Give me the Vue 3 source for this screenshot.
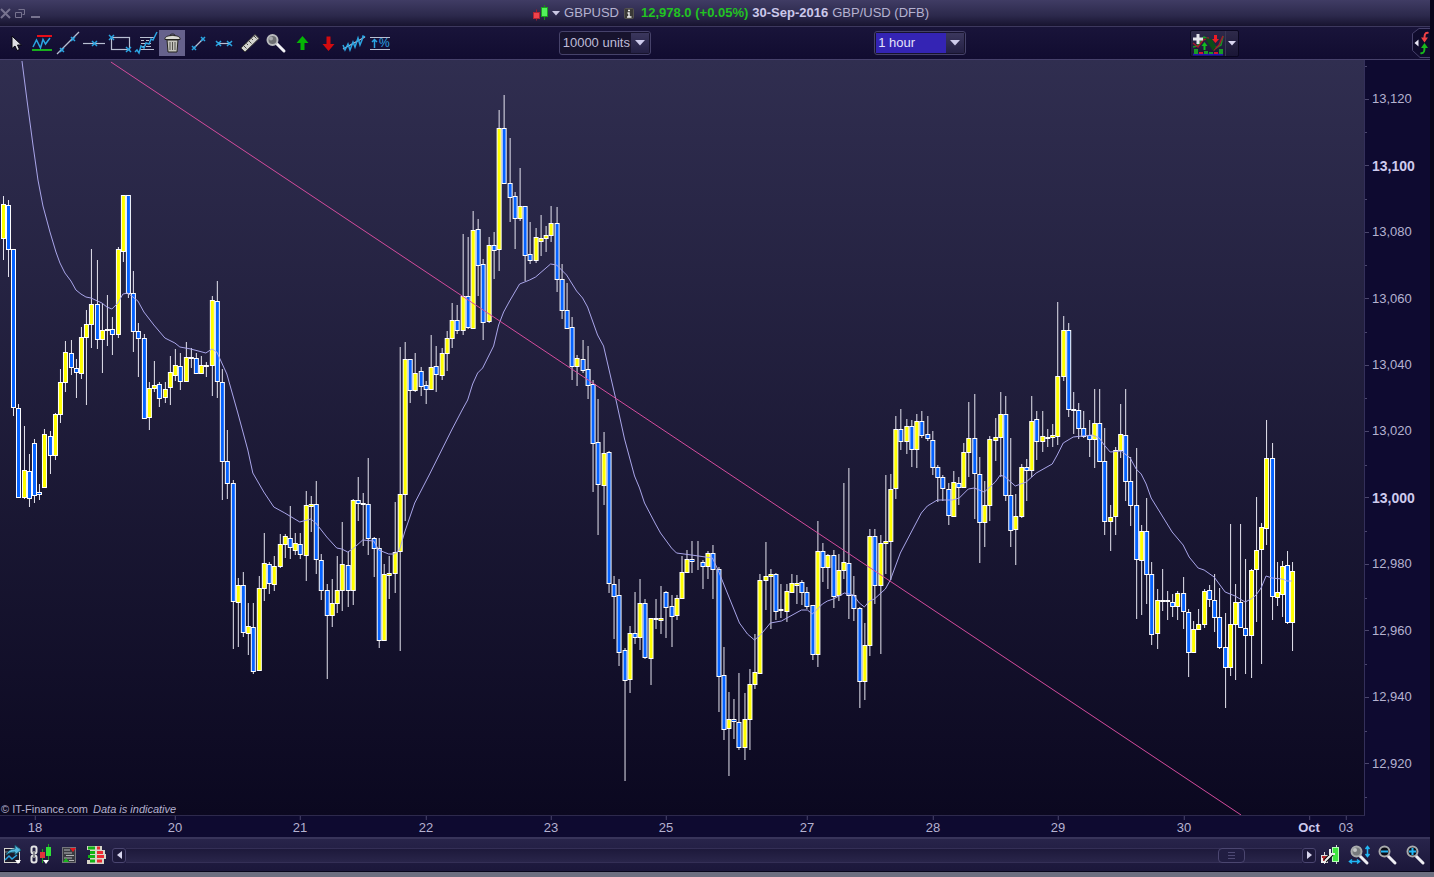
<script setup>
import { ref } from 'vue'

const units = ref('10000 units')
const period = ref('1 hour')
const scroll = ref(95)

// Each candle: x, high, body top, body bottom, low, kind (y rising, b falling)
const raw = `3 196 204 238 260 y;8 200 205 249 277 b;13 249 249 407 416 b;18 404 408 497 498 b;24 426 470 497 499 y;29 454 471 498 507 b;34 439 443 495 503 b;39 484 492 494 500 b;44 429 434 487 487 y;50 431 436 455 474 b;55 413 414 455 460 y;60 369 382 414 423 y;65 341 352 382 392 y;71 340 353 367 375 b;76 359 368 372 398 b;81 327 337 373 379 y;86 310 324 337 405 y;91 249 304 324 348 y;97 260 304 339 349 b;102 303 330 339 373 y;107 295 329 330 346 b;112 317 329 334 355 b;118 247 249 334 338 y;123 195 195 251 262 y;128 195 195 293 298 b;133 271 293 331 352 b;138 323 331 338 377 b;144 334 338 418 419 b;149 382 388 417 430 y;154 361 385 388 392 y;159 382 384 398 407 b;165 382 389 397 403 y;170 356 372 387 405 y;175 349 365 375 381 y;180 353 366 381 390 b;186 342 357 381 382 y;191 348 357 358 368 b;196 353 358 373 374 b;201 356 365 373 374 y;206 362 365 366 377 b;212 296 300 365 396 y;217 281 301 381 398 b;222 369 382 461 500 b;227 430 461 483 499 b;233 480 483 601 649 b;238 578 585 602 647 y;243 572 585 632 637 b;248 603 626 633 655 y;253 603 627 671 674 b;259 576 588 670 670 y;264 533 563 588 601 y;269 562 564 583 594 b;274 556 566 584 591 y;280 534 544 566 568 y;285 534 536 544 558 y;290 506 538 547 559 b;295 533 543 550 555 y;300 533 544 554 559 b;306 491 505 555 581 y;311 496 504 506 532 y;316 481 504 559 574 b;321 554 560 590 600 b;327 584 590 615 679 b;332 579 603 615 627 y;337 556 590 603 613 y;342 522 564 590 611 y;348 552 565 590 607 b;353 499 500 590 605 y;358 477 500 503 521 b;363 493 503 504 546 b;368 458 504 538 555 b;374 537 538 548 577 b;379 538 548 640 648 b;384 564 574 640 640 y;389 556 573 575 599 y;395 502 552 573 593 y;400 347 494 551 651 y;405 342 359 494 521 y;410 359 359 390 403 b;415 353 373 390 392 y;421 367 371 386 396 b;426 381 385 389 404 b;431 335 367 389 390 y;436 346 366 374 392 b;442 348 353 375 380 y;447 331 338 353 371 y;452 303 320 338 348 y;457 305 320 330 334 b;463 234 296 330 335 y;468 237 296 327 329 b;473 211 230 328 328 y;478 219 229 265 296 b;483 259 264 322 340 b;489 237 245 321 323 y;494 232 245 250 279 b;499 110 128 249 271 y;504 95 128 183 184 b;510 138 183 197 222 b;515 192 196 218 249 b;520 168 206 218 221 y;525 206 206 255 281 b;530 222 254 260 264 b;536 228 237 260 263 y;541 215 238 241 256 y;546 226 235 238 252 y;551 206 223 235 242 y;557 207 223 279 292 b;562 264 279 310 319 b;567 283 310 328 329 b;572 317 327 366 380 b;577 355 358 366 386 y;583 340 359 370 373 b;588 346 369 385 399 b;593 380 384 443 492 b;598 399 442 484 535 b;604 432 453 485 505 y;609 451 452 583 593 b;614 576 584 596 639 b;619 579 595 652 666 b;625 648 650 680 781 b;630 626 633 679 693 y;635 592 633 637 644 b;640 579 603 637 650 y;645 599 603 657 659 b;651 618 618 658 685 y;656 599 618 619 629 b;661 586 618 620 634 y;666 591 592 607 638 b;672 595 606 616 647 b;677 595 598 615 620 y;682 556 572 598 599 y;687 550 559 572 572 y;692 541 559 561 573 b;698 541 562 562 570 b;703 560 562 566 589 b;708 551 553 566 579 y;713 545 553 569 599 b;719 567 569 676 712 b;724 647 675 729 740 b;729 692 719 728 776 y;734 699 719 721 739 b;739 673 722 747 750 b;745 693 719 747 760 y;750 669 684 719 750 y;755 634 672 684 689 y;760 574 580 673 674 y;766 542 576 580 610 y;771 569 574 576 629 y;776 573 574 611 620 b;781 584 609 610 618 b;787 584 591 611 622 y;792 574 583 592 592 y;797 575 583 585 604 y;802 580 582 592 605 b;807 587 592 606 609 b;813 605 605 654 660 b;818 521 551 654 667 y;823 543 551 567 582 b;828 554 555 567 589 y;834 550 555 596 608 b;839 554 570 595 601 y;844 483 562 570 579 y;849 468 563 595 619 b;854 576 595 608 621 b;860 607 608 681 708 b;865 623 645 681 700 y;870 529 536 645 656 y;875 529 536 585 604 b;881 535 543 585 654 y;886 475 541 543 574 y;891 474 489 541 580 y;896 416 429 488 499 y;901 409 429 441 450 b;907 419 426 441 454 y;912 420 426 449 467 b;917 414 421 449 468 y;922 411 421 435 438 b;928 416 434 438 441 b;933 431 440 467 475 b;938 465 467 477 502 b;943 475 477 488 501 b;949 483 489 515 525 b;954 471 482 516 517 y;959 477 483 487 505 b;964 443 452 487 488 y;969 402 438 452 477 y;975 394 438 473 519 b;980 457 474 522 563 b;985 481 505 522 547 y;990 436 439 505 521 y;996 418 437 440 461 y;1001 392 414 437 477 y;1006 396 414 495 501 b;1011 438 495 530 547 b;1016 494 516 529 565 y;1022 464 467 516 518 y;1027 459 467 470 501 b;1032 396 421 470 477 y;1037 411 419 441 460 b;1043 411 436 441 452 y;1048 429 437 438 447 b;1053 424 435 437 447 y;1058 302 376 436 445 y;1064 316 330 376 381 y;1069 323 330 409 417 b;1074 392 409 410 434 b;1079 403 410 428 439 b;1084 411 428 436 438 b;1090 420 435 439 457 b;1095 389 423 439 468 y;1100 389 423 461 461 b;1105 428 461 521 535 b;1111 505 517 521 551 y;1116 447 450 516 535 y;1121 404 434 450 458 y;1126 389 435 481 501 b;1131 457 481 505 526 b;1137 448 505 559 619 b;1142 525 531 560 615 y;1147 498 531 574 604 b;1152 562 574 634 645 b;1158 589 600 633 649 y;1163 569 600 601 611 y;1168 591 600 601 620 b;1173 594 602 606 617 b;1178 591 593 606 620 y;1184 577 593 611 629 b;1189 609 612 652 677 b;1194 621 629 652 652 y;1199 609 624 629 630 y;1205 589 591 624 628 y;1210 585 590 599 607 b;1215 574 600 617 632 b;1220 588 617 647 649 b;1226 613 647 667 708 b;1231 524 624 667 676 y;1236 584 602 624 680 y;1241 524 602 627 627 b;1246 559 628 635 674 b;1252 569 570 635 678 y;1257 497 550 569 622 y;1262 523 527 549 664 y;1267 420 458 528 545 y;1273 443 458 596 620 b;1278 562 592 597 606 y;1283 561 566 594 617 y;1288 551 565 622 624 b;1293 562 571 622 651 y`
const candles = raw.split(';').map((row) => {
  const [x, high, top, bottom, low, kind] = row.split(' ')
  return { x: +x, high: +high, top: +top, bottom: +bottom, low: +low, kind }
})

const average = '22,61 27,100 33,145 38,180 43,206 50,232 56,252 60,263 65,273 71,281 76,290 81,294 86,297 91,298 102,303 107,307 112,309 118,303 123,294 128,293 133,297 138,301 144,312 154,325 165,338 175,343 180,347 191,349 206,353 212,349 217,352 227,374 238,413 248,450 253,473 264,492 274,507 285,513 300,522 311,519 316,523 327,537 337,548 342,549 348,552 353,549 363,540 374,541 379,550 389,554 395,554 400,549 405,532 415,503 430,474 452,430 463,409 468,400 473,384 478,373 483,368 494,346 499,325 504,312 510,301 520,284 530,280 536,277 551,264 557,265 567,275 577,291 583,298 588,307 598,335 604,346 616,398 625,439 635,476 640,488 645,503 656,524 661,533 672,548 677,553 692,555 713,558 719,571 725,586 740,623 748,634 755,640 761,635 771,623 782,621 802,610 808,610 813,614 823,604 828,601 834,599 845,593 854,595 860,603 865,607 870,601 875,599 886,589 891,580 901,553 912,532 922,513 928,506 938,500 953,500 960,498 969,489 975,488 985,492 996,482 1001,475 1006,477 1016,486 1027,482 1037,473 1053,464 1058,455 1064,443 1074,437 1083,436 1093,435 1100,438 1105,445 1111,452 1122,451 1131,458 1137,469 1142,474 1147,484 1152,498 1173,532 1184,545 1190,557 1199,568 1205,570 1215,577 1226,592 1236,596 1246,602 1252,599 1257,595 1262,588 1267,576 1273,578 1283,579 1288,581 1293,581'

const prices = ['13,120', '13,100', '13,080', '13,060', '13,040', '13,020', '13,000', '12,980', '12,960', '12,940', '12,920']
const majors = ['13,100', '13,000']

const dates = [
  { at: 35, text: '18' }, { at: 175, text: '20' }, { at: 300, text: '21' }, { at: 426, text: '22' },
  { at: 551, text: '23' }, { at: 666, text: '25' }, { at: 807, text: '27' }, { at: 933, text: '28' },
  { at: 1058, text: '29' }, { at: 1184, text: '30' }, { at: 1309, text: 'Oct', major: true }, { at: 1346, text: '03' },
]
const dateLeft = (at) => ({ left: (at / 1430) * 100 + '%' })
</script>

<template>
  <main class="window">
    <header class="title">
      <div class="controls">
        <button aria-label="Close"><svg width="11" height="11"><path d="M1 1l9 9M10 1l-9 9" class="ctl" stroke-width="2" /></svg></button>
        <button aria-label="Restore"><svg width="11" height="11"><path d="M3.500 1.500h6v5h-2M.5 4.500h6v5h-6z" class="ctl" /></svg></button>
        <button aria-label="Minimise"><svg width="11" height="11"><path d="M1 9h9" class="ctl" stroke-width="2" /></svg></button>
      </div>
      <div class="instrument">
        <svg width="16" height="16" viewBox="0 0 16 16">
          <path d="M3.500 4.500v11" stroke="#a01c2c" /><rect x=".5" y="7.500" width="6" height="6" fill="#f0434b" stroke="#b02532" />
          <path d="M11.500 0v15" stroke="#148c14" /><rect x="8.500" y="2.500" width="6" height="9" fill="#53f25b" stroke="#1ba020" />
        </svg>
        <button class="caret" aria-label="Change instrument"><svg width="8" height="5"><path d="M0 0h8l-4 4.500z" fill="#cbc8e4" /></svg></button>
        <span>GBPUSD</span>
        <svg class="info" width="10" height="11" viewBox="0 0 10 11"><rect x=".5" y=".5" width="9" height="10" rx="1" fill="#3a3937" stroke="#55534f" /><path d="M4 2.500h2M3.500 5H5V8.500M3 9h4.500" stroke="#ececec" fill="none" stroke-width="1.500" /></svg>
        <strong class="up">12,978.0 (+0.05%)</strong>
        <strong class="day">30-Sep-2016</strong>
        <span>GBP/USD (DFB)</span>
      </div>
    </header>

    <nav class="toolbar">
      <div class="tools">
        <button aria-label="Select"><svg viewBox="0 0 26 26"><path d="M9 6v12.500l3-2.500 2 4.500 2.500-1-2-4.500h4z" fill="#dedee4" stroke="#04040c" /></svg></button>
        <button aria-label="Levels"><svg viewBox="0 0 26 26"><path d="M8 6h15" stroke="#e80c18" stroke-width="2" /><path d="M3 20h20" stroke="#18b01c" stroke-width="2" /><path d="M4 17l3.500-7 4 8 2.500-8.500 2.500 4.500L21 8" class="blue" /></svg></button>
        <button aria-label="Line"><svg viewBox="0 0 26 26"><path d="M2 24L24 2" class="pale" /><path d="M5 18l4 4M9 18l-4 4M16 7l4 4M20 7l-4 4" class="blue" /></svg></button>
        <button aria-label="Horizontal line"><svg viewBox="0 0 26 26"><path d="M2 13.500h22" class="pale" /><path d="M11 11l5 5M16 11l-5 5" class="blue" /></svg></button>
        <button aria-label="Rectangle"><svg viewBox="0 0 26 26"><rect x="4.500" y="7.500" width="18" height="12" class="pale" /><path d="M2 5l5 5M7 5l-5 5M19 17l5 5M24 17l-5 5" class="blue" /></svg></button>
        <button aria-label="Fibonacci"><svg viewBox="0 0 26 26"><path d="M7 7.500h14M7 19.500h14M8 10.500h3M13 10.500h3M8 13.500h4M14 13.500h4M8 16.500h3M13 16.500h5" class="pale" /><path d="M2 22l2-2 2 3 2-7 3 2 2-5 3 1 2-5 2 1 4-8" class="blue" /></svg></button>
        <button class="active" aria-label="Delete"><svg viewBox="0 0 26 26"><path d="M8 10h11l-1 12H9z" fill="#c4c4bd" stroke="#24241f" /><path d="M11 12v8M13.500 12v8M16 12v8" stroke="#51514c" /><path d="M6 8.500c0-2 4-3 7.500-3s7.500 1 7.500 3v1H6z" fill="#dcdcd4" stroke="#24241f" /><path d="M11 5.500c0-2 5-2 5 0" fill="none" stroke="#24241f" /></svg></button>
        <button aria-label="Segment"><svg viewBox="0 0 26 26"><path d="M9 18l9-9" class="pale" /><path d="M7 16l4 4M11 16l-4 4M16 7l4 4M20 7l-4 4" class="blue" /></svg></button>
        <button aria-label="Horizontal segment"><svg viewBox="0 0 26 26"><path d="M7 13.500h12" class="pale" /><path d="M5 11l5 5M10 11l-5 5M16 11l5 5M21 11l-5 5" class="blue" /></svg></button>
        <button aria-label="Ruler"><svg viewBox="0 0 26 26"><path d="M4 18L18 4.500l4 4L8 22z" fill="#d3d3cf" stroke="#3c3c38" /><path d="M7 16l2.500 2.500M9.500 13.500L11 15M12 11l2.500 2.500M14.500 8.500L16 10M17 6l2.500 2.500" stroke="#45453f" /></svg></button>
        <button aria-label="Zoom"><svg viewBox="0 0 26 26"><path d="M13 13l8 8" stroke="#f2f2f6" stroke-width="3" stroke-linecap="round" /><circle cx="9.500" cy="10" r="5" fill="#6d6f72" stroke="#b9bbbd" stroke-width="2" /><circle cx="8" cy="8.500" r="2" fill="#a5a8ab" /></svg></button>
        <button aria-label="Buy"><svg viewBox="0 0 26 26"><path d="M13.500 6l6 7h-4v7h-4v-7h-4z" fill="#05b505" /></svg></button>
        <button aria-label="Sell"><svg viewBox="0 0 26 26"><path d="M13.500 21l6-7h-4V6.500h-4V14h-4z" fill="#d30b0f" /></svg></button>
        <button aria-label="Channel"><svg viewBox="0 0 26 26"><path d="M2 19L24 7" class="pale" /><path d="M2 15l2 5 3-6 2 6 3-8 2 5 3-9 2 7 2-5 1-4 2 1" class="blue" /></svg></button>
        <button aria-label="Percent move"><svg viewBox="0 0 26 26"><path d="M3 7.500h20M3 19.500h20" class="pale" /><path d="M7.500 18V10M5 12l2.500-2.500L10 12" class="blue" /><text x="12" y="17" class="pct">%</text></svg></button>
      </div>

      <div>
        <label class="pick">
          <select v-model="units" aria-label="Units"><option>10000 units</option><option>20000 units</option></select>
          <span class="drop"><svg width="10" height="6"><path d="M0 0h10l-5 5.500z" fill="#cfccec" /></svg></span>
        </label>
      </div>
      <div>
        <label class="pick chosen">
          <select v-model="period" aria-label="Period"><option>1 hour</option><option>4 hours</option></select>
          <span class="drop"><svg width="10" height="6"><path d="M0 0h10l-5 5.500z" fill="#cfccec" /></svg></span>
        </label>
      </div>
      <div class="right">
        <div class="indicator">
          <button aria-label="Add indicator"><svg width="34" height="25" viewBox="0 0 34 25">
            <path d="M2 16l4-1 7-9 6 3 6 8 5-3 2-9" fill="none" stroke="#169a24" stroke-width="1.500" />
            <path d="M2 12l5 4 5-7 5-2 6 12 5-5 4-9" fill="none" stroke="#a4192c" stroke-width="1.500" />
            <path d="M14 7l7 1 4 8-3 4z" fill="#0c4d18" />
            <path d="M13.500 11l3 4h-2v4h-2v-4h-2z" fill="#12c01e" /><path d="M24.500 12l3.500-4h-2V4h-3v4h-2z" fill="#ee1c25" />
            <path d="M7 3v10M2 8h10" stroke="#e4e4ec" stroke-width="3" />
            <path d="M2 23.500h30" stroke="#2514b4" stroke-width="2" />
            <path d="M3 18h4v5H3zM13 20h4v3h-4zM18 21h4v2h-4zM28 18h4v5h-4z" fill="#189c26" /><path d="M8 21h4v2H8zM23 21h4v2h-4z" fill="#d4152f" />
          </svg></button>
          <button class="more" aria-label="Indicator list"><svg width="8" height="5"><path d="M0 0h8l-4 4.500z" fill="#d9d6f0" /></svg></button>
        </div>
        <button class="tab" aria-label="Open orders panel"><svg width="19" height="32" viewBox="0 0 19 32">
          <path d="M19 1.500H8L1.500 6.500v17L9 30.500h10" fill="#0f0b2c" stroke="#46416b" />
          <path d="M7.500 12.500v7l-4-3.500z" fill="#e8e6f4" />
          <path d="M17.500 6c-4-1-4 3-4 5" fill="none" stroke="#f04045" stroke-width="2" /><path d="M10 10.500h7l-3.500 5z" fill="#f04045" />
          <path d="M9.500 26c4 1 4-3 4-6" fill="none" stroke="#18b81c" stroke-width="2" /><path d="M10 21h7l-3.500-5z" fill="#18b81c" />
        </svg></button>
      </div>
    </nav>

    <section class="chart">
      <div class="plot">
        <svg class="series" viewBox="0 60 1365 755" preserveAspectRatio="none">
          <g v-for="c in candles" :key="c.x">
            <path :d="`M${c.x + 0.5} ${c.high}V${c.low}`" class="wick" />
            <rect :x="c.x - 1.5" :y="c.top + 0.5" width="4" :height="c.bottom - c.top" :class="c.kind === 'y' ? 'rise' : 'fall'" />
          </g>
          <polyline :points="average" class="average" />
          <path d="M111 62L1242 815" class="trend" />
        </svg>
        <p class="source">© IT-Finance.com <em>Data is indicative</em></p>
      </div>
      <ol class="prices">
        <li v-for="p in prices" :key="p" :class="{ major: majors.includes(p) }">{{ p }}</li>
      </ol>
      <div class="dates">
        <span v-for="d in dates" :key="d.text" :style="dateLeft(d.at)" :class="{ major: d.major }">{{ d.text }}</span>
      </div>
    </section>

    <footer class="bottom">
      <button aria-label="Save chart"><svg viewBox="0 0 28 24"><rect x="4.500" y="5.500" width="15" height="14" fill="#1c1b2c" stroke="#d6d4cf" /><path d="M5 9h14" stroke="#8b8b90" /><path d="M5 17l4-4 3 3 5-4" class="blue" /><path d="M6 12c2-5 6-6 9-6V2l6 5-6 5V9c-4 0-6 1-9 3z" fill="#54b9e0" stroke="#15596f" /><path d="M15 17h6l-3 4z" fill="#fff" /></svg></button>
      <button aria-label="Link and style"><svg viewBox="0 0 28 24"><rect x="3.500" y="3.500" width="5" height="7" rx="2" fill="none" stroke="#e4e4e4" stroke-width="2" /><rect x="3.500" y="12.500" width="5" height="7" rx="2" fill="none" stroke="#e4e4e4" stroke-width="2" /><path d="M6 8v7" stroke="#85858c" stroke-width="2" /><path d="M14.500 6v14M20.500 1v16" stroke="#1aa51e" /><rect x="12" y="9" width="5" height="6" fill="#e0343b" /><rect x="18" y="4" width="5" height="9" fill="#2fe239" /><path d="M15 17h6l-3 4z" fill="#fff" /></svg></button>
      <button aria-label="Order list"><svg viewBox="0 0 28 24"><rect x="6.500" y="4.500" width="13" height="15" fill="#3b3c42" stroke="#75767c" /><path d="M8 7h6M8 10h8M10 12.500h8M8 15h8M13 17.500h5" stroke="#b4b5b8" /><path d="M14 5h6l-3 4z" fill="#e5141c" /><path d="M7 19h6l-3-4z" fill="#18b51c" /></svg></button>
      <button aria-label="Order book"><svg viewBox="0 0 28 24"><path d="M3 3h15v4h3v5h-1v-1h2v5h-2v5H3v-4h3V7H3z" fill="#d7d5c8" /><path d="M4 5h7M6 9.500h5M4 13.500h7M6 18h5" stroke="#12b315" stroke-width="3" /><path d="M13 5h3M13 9.500h6M13 13.500h7M13 18h5" stroke="#ec2a32" stroke-width="3" /></svg></button>
      <div class="scroller">
        <button class="step" aria-label="Scroll back"><svg width="5" height="8"><path d="M5 0v8L0 4z" fill="#d8d6ee" /></svg></button>
        <input v-model="scroll" type="range" min="0" max="100" aria-label="Chart position" />
        <button class="step" aria-label="Scroll forward"><svg width="5" height="8"><path d="M0 0v8l5-4z" fill="#d8d6ee" /></svg></button>
      </div>
      <button aria-label="Chart settings"><svg viewBox="0 0 28 24"><path d="M6.500 9v12M18.500 2v19" stroke="#d8d8d8" /><rect x="3.500" y="12.500" width="6" height="7" fill="#b3282d" stroke="#ddd" /><rect x="14.500" y="4.500" width="6" height="14" fill="#3fe53f" stroke="#b9ffb9" /><path d="M7 18l7-7" stroke="#0a0a0a" stroke-width="4" /><path d="M7 18l7-7M12 6v5h5M4 15v4h4" stroke="#ececec" stroke-width="2" fill="none" /></svg></button>
      <button aria-label="Fit"><svg viewBox="0 0 28 24"><path d="M14 13l7 7" stroke="#eeeef4" stroke-width="3" stroke-linecap="round" /><circle cx="10.500" cy="8.500" r="5" fill="#777a7d" stroke="#a9abad" stroke-width="2" /><circle cx="9" cy="7" r="2" fill="#c3c5c6" /><path d="M21.500 4v9M19.500 6l2-2.500 2 2.500M19.500 11l2 2.500 2-2.500M4 18.500h9M6 16.500l-2.500 2 2.500 2M11 16.500l2.500 2-2.500 2" stroke="#20b6f4" stroke-width="1.500" fill="none" /></svg></button>
      <button aria-label="Zoom out"><svg viewBox="0 0 28 24"><path d="M14 13l7 7" stroke="#eeeef4" stroke-width="3" stroke-linecap="round" /><circle cx="10.500" cy="8.500" r="5" fill="#0c0d15" stroke="#a9abad" stroke-width="2" /><path d="M7 8.500h7" stroke="#20b6f4" stroke-width="2" /></svg></button>
      <button aria-label="Zoom in"><svg viewBox="0 0 28 24"><path d="M14 13l7 7" stroke="#eeeef4" stroke-width="3" stroke-linecap="round" /><circle cx="10.500" cy="8.500" r="5" fill="#0c0d15" stroke="#a9abad" stroke-width="2" /><path d="M7 8.500h7M10.500 5v7" stroke="#20b6f4" stroke-width="2" /></svg></button>
    </footer>
  </main>
</template>

<style>
html { background: #6d6f80; }
body { background: linear-gradient(#07051a, #07051a) top / 100% calc(100% - 5px) no-repeat; min-height: 100vh; }
</style>

<style scoped>
.window {
  box-sizing: border-box;
  display: flex;
  flex-direction: column;
  height: calc(100vh - 6px);
  margin-right: 4px;
  background: #0e0a30;
  color: #b5b2d0;
  font: 13px/16px "Liberation Sans", Arial, sans-serif;
}
button { padding: 0; border: 0; background: none; color: inherit; display: flex; align-items: center; justify-content: center; }
.title {
  display: flex;
  align-items: center;
  height: 26px;
  flex: none;
  position: relative;
  background: linear-gradient(#403c64, #2c294c 60%, #17132f);
  border-bottom: 1px solid #3d385e;
}
.controls { display: flex; gap: 4px; }
.ctl { fill: none; stroke: #77738f; }
.instrument { display: flex; align-items: center; gap: 4px; position: absolute; left: 37%; margin-left: 4px; white-space: nowrap; }
.info { margin: 0 3px 0 1px; }
.caret { margin-left: -1px; }
.up { color: #22c322; }
.day { color: #cbc8ea; }
.toolbar {
  display: grid;
  grid-template-columns: 39% 22% 22% 1fr;
  align-items: center;
  height: 30px;
  padding-bottom: 2px;
  flex: none;
  background: linear-gradient(#19143a, #110c30);
  border-bottom: 1px solid #46416a;
}
.tools { display: flex; padding-left: 3px; }
.tools button { width: 26px; height: 26px; }
.tools svg { width: 26px; height: 26px; }
.tools .active { background: #66628c; }
.blue { fill: none; stroke: #2ba5e2; stroke-width: 1.5; }
.pale { fill: none; stroke: #b9bfd2; stroke-width: 1.2; }
.pct { font: 12px "Liberation Sans", sans-serif; fill: #2ba5e2; }
.pick { position: relative; display: flex; width: max-content; margin-left: 1px; border: 1px solid #46426a; border-radius: 3px; background: #17132d; padding: 1px; }
.pick select { appearance: none; border: 0; margin: 0; padding: 0 0 0 2px; width: 88px; height: 20px; background: transparent; color: #bfbcd8; font: inherit; }
.chosen { margin-left: 2px; }
.chosen select { background: #3424b4; color: #e4e2fa; }
.drop { position: absolute; right: 1px; top: 1px; bottom: 1px; width: 18px; display: flex; align-items: center; justify-content: center; background: linear-gradient(#3b375d, #242044); pointer-events: none; }
.right { display: flex; align-items: center; justify-content: space-between; padding-left: 3px; }
.indicator { display: flex; background: linear-gradient(#2e2a4a, #1a1636); border: 1px solid #0a0720; border-radius: 2px; }
.more { width: 13px; border-left: 1px solid #3b3755; }
.chart {
  display: grid;
  grid-template-columns: minmax(0, 1fr) 65px;
  grid-template-rows: minmax(0, 1fr) 21px;
  flex: 1;
  min-height: 0;
}
.plot { position: relative; min-height: 0; background: linear-gradient(#302e50, #0b0820); border-right: 1px solid #34305a; border-bottom: 1px solid #2d294c; overflow: hidden; }
.series { display: block; width: 100%; height: 100%; }
.wick { stroke: #e6e5f0; stroke-width: 1; }
.rise, .fall { stroke: #fff; stroke-width: 1; }
.rise { fill: #ff0; }
.fall { fill: #0562ff; }
.average { fill: none; stroke: #aaa6ea; stroke-width: 1; }
.trend { stroke: #d44b9d; stroke-width: 1; }
.source { position: absolute; left: 1px; bottom: 0; margin: 0; font-size: 11px; line-height: 12px; white-space: pre; }
.source em { margin-left: 2px; }
.prices { display: flex; flex-direction: column; margin: 0; padding: 6px 0 18px; list-style: none; }
.prices li { flex: 1; display: flex; align-items: center; position: relative; }
.prices li::before { content: ""; width: 4px; height: 1px; margin-right: 3px; background: #4a466c; }
.prices li::after, .prices::after { content: ""; position: absolute; left: 0; top: 0; width: 2px; height: 1px; background: #4a466c; }
.prices::after { position: static; }
.major { font-weight: bold; font-size: 14px; color: #cecbee; }
.dates { grid-column: 1 / -1; position: relative; }
.dates span { position: absolute; top: 4px; transform: translateX(-50%); }
.dates span::before { content: ""; position: absolute; left: 50%; top: -4px; width: 1px; height: 4px; background: #4a466c; }
.dates .major { font-size: 13px; }
.bottom { display: flex; align-items: center; height: 32px; flex: none; background: linear-gradient(#28244a, #1b173a); border-top: 2px solid #38345a; }
.bottom > button { width: 28px; height: 24px; flex: none; }
.bottom > button svg { width: 28px; height: 24px; }
.scroller { display: flex; align-items: center; flex: 1; min-width: 0; margin-right: 2px; }
.step { width: 14px; height: 15px; border: 1px solid #4a4570; border-radius: 3px; background: #1c183a; }
.scroller input { appearance: none; flex: 1; min-width: 0; height: 15px; margin: 0; background: linear-gradient(#1d193b, #29254a); border: 1px solid #342f56; border-width: 1px 0; box-sizing: border-box; }
.scroller input::-webkit-slider-thumb { appearance: none; width: 27px; height: 15px; border: 1px solid #4b4670; border-radius: 4px; background: repeating-linear-gradient(#4e4974 0 1px, transparent 1px 3px) center / 7px 7px no-repeat #211d42; }
</style>
